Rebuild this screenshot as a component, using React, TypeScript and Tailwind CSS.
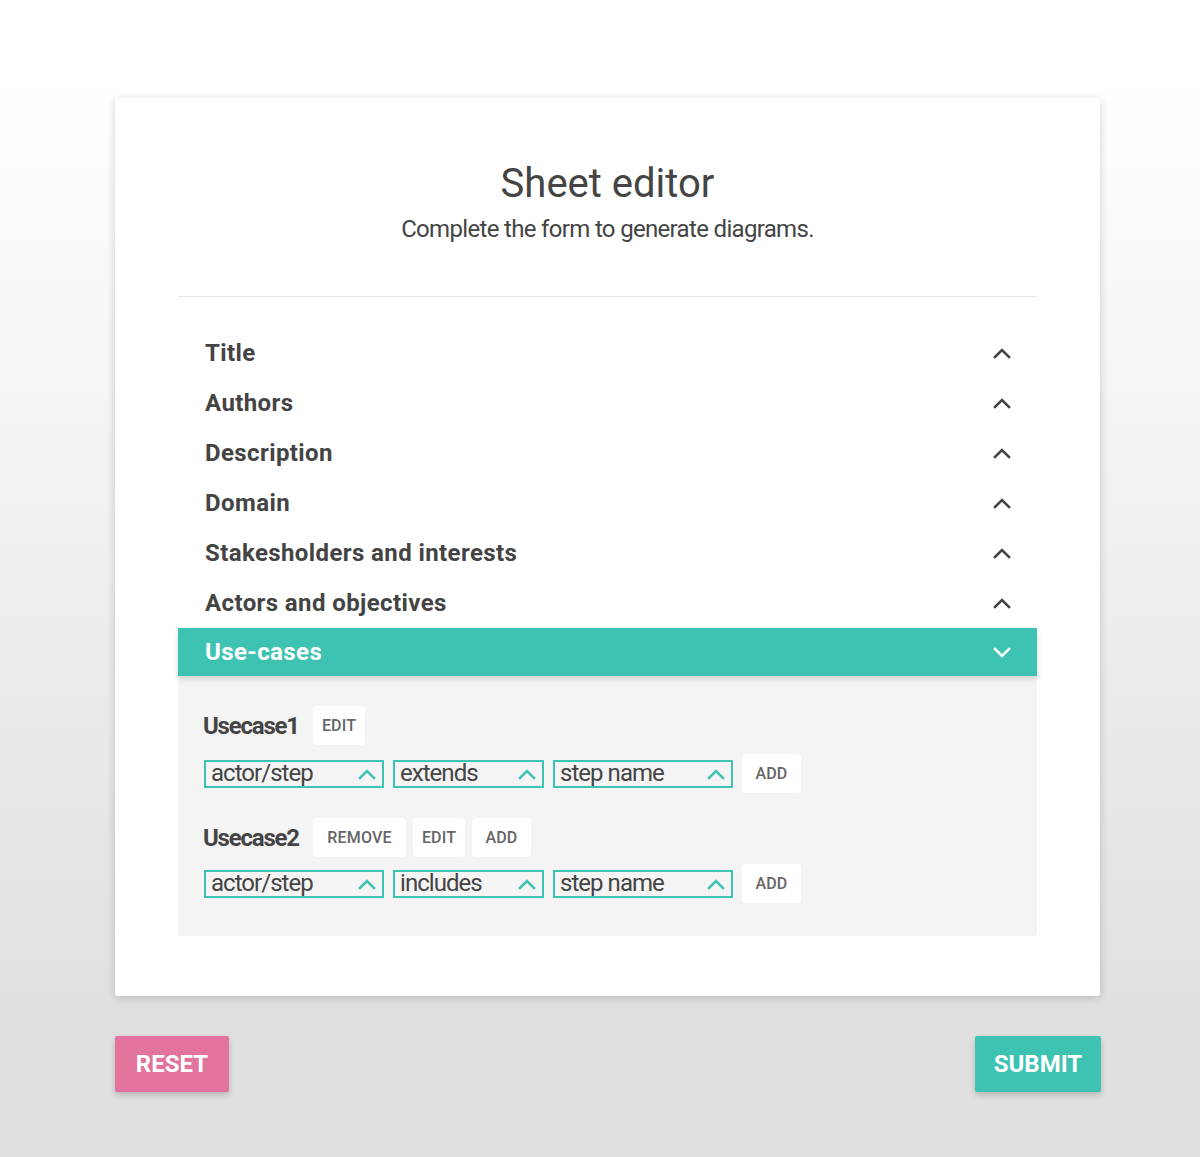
import React from 'react';

const sections = [
  'Title',
  'Authors',
  'Description',
  'Domain',
  'Stakesholders and interests',
  'Actors and objectives',
];

const font = { fontFamily: 'Roboto, "Noto Sans", sans-serif' };

function Chevron({ up = true, color = '#444' }: { up?: boolean; color?: string }) {
  return (
    <svg width="18" height="12" viewBox="0 0 18 12" fill="none">
      <polyline
        points={up ? '2,10 9,3 16,10' : '2,3 9,10 16,3'}
        stroke={color}
        strokeWidth="2.6"
        strokeLinecap="square"
      />
    </svg>
  );
}

function Select({ label, width }: { label: string; width: string }) {
  return (
    <div
      className={`${width} h-[28px] border-2 border-[#3ec3b3] flex items-center justify-between pl-[5px] pr-[6px]`}
    >
      <span className="text-[24px] leading-none text-[#444] tracking-[-0.04em] pb-[1px]">{label}</span>
      <Chevron color="#3ec3b3" />
    </div>
  );
}

const btnWidth: Record<string, string> = {
  EDIT: 'w-[52px]',
  REMOVE: 'w-[93px]',
  ADD: 'w-[59px]',
};

function SmallBtn({ label }: { label: string }) {
  return (
    <button
      className={`${btnWidth[label]} h-[39px] bg-white rounded-[4px] text-[16px] font-medium text-[#666] tracking-[0.01em]`}
    >
      {label}
    </button>
  );
}

function Usecase({
  name,
  buttons,
  rel,
  gap,
}: {
  name: string;
  buttons: string[];
  rel: string;
  gap: string;
}) {
  return (
    <div className={`flex flex-col ${gap}`}>
      <div className="flex items-center">
        <span className="w-[110px] text-[24px] font-bold text-[#444] tracking-[-0.05em]">{name}</span>
        <div className="flex gap-[7px]">
          {buttons.map((b) => (
            <SmallBtn key={b} label={b} />
          ))}
        </div>
      </div>
      <div className="flex items-center gap-[9px] pl-[1px]">
        <Select label="actor/step" width="w-[180px]" />
        <Select label={rel} width="w-[151px]" />
        <Select label="step name" width="w-[180px]" />
        <SmallBtn label="ADD" />
      </div>
    </div>
  );
}

export default function App() {
  return (
    <div
      className="min-h-[1157px] w-full bg-[linear-gradient(180deg,#ffffff_7%,#e0e0e0_88%)] pt-[98px]"
      style={font}
    >
      <div className="ml-[115px] w-[985px] bg-white rounded-[3px] shadow-[0_2px_10px_rgba(0,0,0,0.18)] px-[63px] pt-[62px] pb-[60px]">
        <div className="text-center">
          <h1 className="text-[40px] leading-[48px] text-[#444]">Sheet editor</h1>
          <p className="mt-[7px] text-[24px] leading-[28px] text-[#444] tracking-[-0.028em]">
            Complete the form to generate diagrams.
          </p>
        </div>
        <div className="mt-[53px] border-t border-[#e4e4e4]" />

        <div className="mt-[31px]">
          {sections.map((s) => (
            <div key={s} className="h-[50px] flex items-center justify-between pl-[27px] pr-[26px]">
              <span className="text-[24px] font-bold text-[#444] tracking-[0.4px]">{s}</span>
              <Chevron />
            </div>
          ))}
          <div className="h-[48px] flex items-center justify-between pl-[27px] pr-[26px] bg-[#3ec3b3] shadow-[0_3px_6px_rgba(0,0,0,0.15)] relative">
            <span className="text-[24px] font-bold text-white tracking-[0.4px]">Use-cases</span>
            <Chevron up={false} color="#fff" />
          </div>
          <div className="bg-[#f4f4f4] rounded-b-[3px] pl-[25px] pt-[30px] pb-[33px] flex flex-col gap-[25px]">
            <Usecase name="Usecase1" buttons={['EDIT']} rel="extends" gap="gap-[9px]" />
            <Usecase name="Usecase2" buttons={['REMOVE', 'EDIT', 'ADD']} rel="includes" gap="gap-[7px]" />
          </div>
        </div>
      </div>

      <div className="ml-[115px] w-[986px] mt-[40px] flex justify-between">
        <button className="h-[56px] w-[114px] bg-[#e1739c] rounded-[2px] text-white text-[24px] font-bold shadow-[0_3px_6px_rgba(0,0,0,0.2)]">
          RESET
        </button>
        <button className="h-[56px] w-[126px] bg-[#3ec3b3] rounded-[2px] text-white text-[24px] font-bold shadow-[0_3px_6px_rgba(0,0,0,0.2)]">
          SUBMIT
        </button>
      </div>
    </div>
  );
}
